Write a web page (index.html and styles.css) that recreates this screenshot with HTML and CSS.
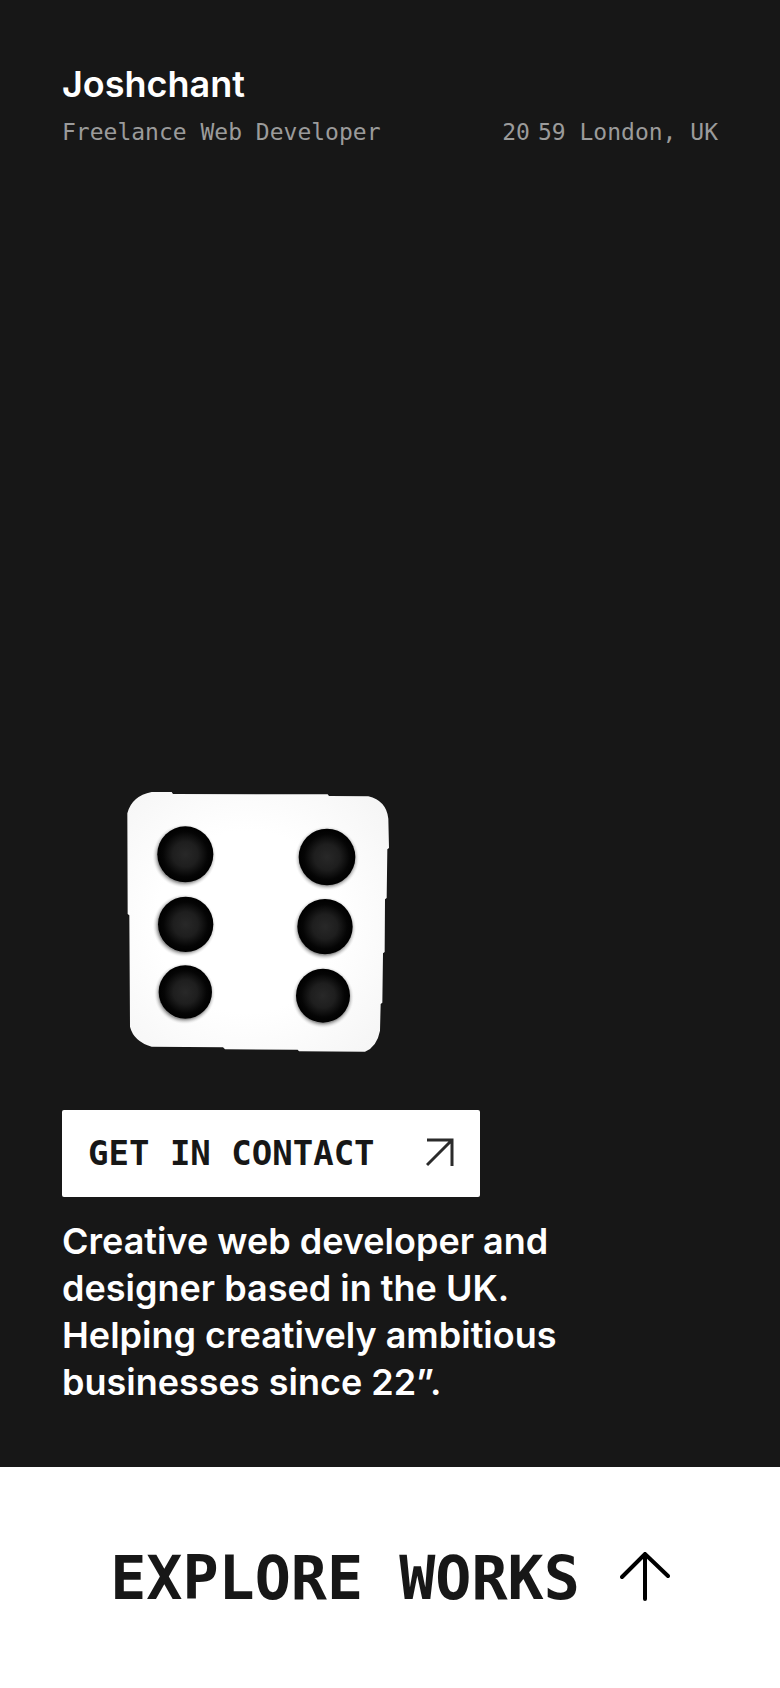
FILE: index.html
```html
<!DOCTYPE html>
<html lang="en">
<head>
<meta charset="utf-8">
<meta name="viewport" content="width=device-width, initial-scale=1">
<title>Joshchant</title>
<link rel="stylesheet" href="styles.css">
</head>
<body>
<div class="page">
  <header class="header">
    <h1 class="name">Joshchant</h1>
    <div class="meta">
      <p>Freelance Web Developer</p>
      <p class="place"><time class="clock"><span>20</span><span>59</span></time> London, UK</p>
    </div>
  </header>
  <main class="intro">
    <svg class="dice" viewBox="45 33 795 789" role="img" aria-label="Dice showing six">
      <defs>
        <radialGradient id="face" cx="0.46" cy="0.5" r="0.7">
          <stop offset="0.5" stop-color="#fff"/>
          <stop offset="1" stop-color="#f5f5f5"/>
        </radialGradient>
        <radialGradient id="pip">
          <stop offset="0" stop-color="#282828"/>
          <stop offset="0.45" stop-color="#1e1e1e"/>
          <stop offset="0.8" stop-color="#050505"/>
          <stop offset="1" stop-color="#000"/>
        </radialGradient>
        <radialGradient id="halo">
          <stop offset="0.84" stop-color="#999"/>
          <stop offset="1" stop-color="#eee" stop-opacity="0"/>
        </radialGradient>
      </defs>
      <path fill="url(#face)" d="M122 36H182L186 42L650 43L654 48L772 49Q826 62 832 116L834 204L829 208L827 354L822 358L821 516L816 520L814 668L809 672L807 752Q798 800 762 815L564 814L560 809L342 808L336 802L122 800Q68 784 57 740L55 406L50 402L49 100Q62 48 122 36Z"/>
      <g fill="url(#halo)">
        <circle cx="220" cy="228" r="96"/><circle cx="220" cy="437" r="95"/><circle cx="221" cy="641" r="92"/>
        <circle cx="648" cy="235" r="97"/><circle cx="641" cy="445" r="95"/><circle cx="636" cy="652" r="93"/>
      </g>
      <g fill="url(#pip)">
        <circle cx="223" cy="223" r="84"/><circle cx="224" cy="433" r="83"/><circle cx="223" cy="636" r="80"/>
        <circle cx="648" cy="231" r="85"/><circle cx="642" cy="440" r="83"/><circle cx="636" cy="647" r="81"/>
      </g>
    </svg>
    <a class="contact" href="#contact">
      <span>GET IN CONTACT</span>
      <svg class="contact-arrow" viewBox="0 0 28 32" aria-hidden="true"><path d="M1 2H26V28M26 2L1 27"/></svg>
    </a>
    <p class="blurb">Creative web developer and designer based in the UK. Helping creatively ambitious businesses since 22”.</p>
  </main>
  <a class="explore" href="#works">
    <span>EXPLORE WORKS</span>
    <svg class="explore-arrow" viewBox="0 0 50 52" aria-hidden="true"><path d="M25 47V2M2 25L25 2L48 24"/></svg>
  </a>
</div>
</body>
</html>
```
FILE: styles.css
```css
* {
  box-sizing: border-box;
}

body {
  margin: 0;
  background: #171717;
  color: #fff;
  font-family: Inter, "Liberation Sans", sans-serif;
}

h1,
p {
  margin: 0;
}

a {
  color: #171717;
  background: #fff;
  text-decoration: none;
  font-family: "DejaVu Sans Mono", "Liberation Mono", monospace;
  font-weight: 700;
}

svg {
  display: block;
  flex: none;
}

.page {
  min-height: 100vh;
  display: flex;
  flex-direction: column;
}

.header {
  padding: 60px 62px 0;
}

.name {
  font-size: 36px;
  line-height: 48px;
  font-weight: 600;
}

.meta {
  display: flex;
  justify-content: space-between;
  margin-top: 8px;
  color: #9b9b9b;
  font-family: "DejaVu Sans Mono", "Liberation Mono", monospace;
  font-size: 23px;
  line-height: 32px;
}

.clock {
  display: inline-flex;
  gap: 8px;
}

.intro {
  flex: 1;
  display: flex;
  flex-direction: column;
  justify-content: flex-end;
  align-items: flex-start;
  padding: 64px 62px 61px;
}

.dice {
  width: 265px;
  margin: 0 0 56px 64px;
}

.contact {
  display: flex;
  align-items: center;
  gap: 51px;
  padding: 20px 26px;
  border-radius: 2px;
  font-size: 34px;
  line-height: 47px;
}

.contact-arrow {
  width: 28px;
  fill: none;
  stroke: #2b2b2b;
  stroke-width: 3;
}

.blurb {
  max-width: 520px;
  margin-top: 21px;
  font-size: 36px;
  line-height: 47px;
  font-weight: 600;
}

.explore {
  display: flex;
  justify-content: center;
  align-items: center;
  gap: 40px;
  padding: 75px 24px 74px;
  font-size: 60px;
  line-height: 72px;
}

.explore-arrow {
  width: 50px;
  fill: none;
  stroke: #000;
  stroke-width: 4;
  stroke-linecap: round;
}
```
